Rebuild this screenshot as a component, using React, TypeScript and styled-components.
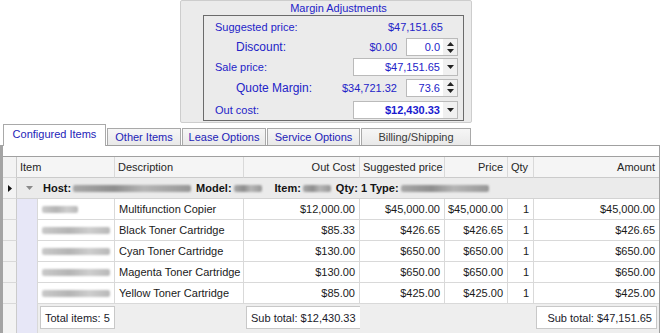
import styled, { createGlobalStyle } from 'styled-components';

const GlobalStyle = createGlobalStyle`
  html, body { margin: 0; padding: 0; background: #fff; }
  body { font-family: 'Liberation Sans', Arial, sans-serif; font-size: 11px; }
`;

const Page = styled.div`
  width: 660px;
  height: 333px;
  overflow: hidden;
  display: flex;
  flex-direction: column;
  background: #fff;
`;

const TopArea = styled.div`
  height: 124px;
  padding-left: 180px;
  box-sizing: border-box;
`;

const GroupBox = styled.div`
  width: 292px;
  height: 123px;
  box-sizing: border-box;
  border: 1px solid #cdcdcd;
  border-radius: 2px;
  background: #ebebeb;
  display: flex;
  flex-direction: column;
  padding: 0 7px 2px 22px;
`;

const GroupTitle = styled.div`
  height: 14px;
  line-height: 15px;
  padding-left: 10px;
  text-align: center;
  color: #2323c8;
`;

const InnerBox = styled.div`
  flex: 1;
  border: 1px solid #6b6b6b;
  display: flex;
  flex-direction: column;
`;

const FieldRow = styled.div<{ $h: number }>`
  height: ${({ $h }) => $h}px;
  display: flex;
  align-items: center;
  padding-right: 5px;
  color: #2323c8;
`;

const FieldLabel = styled.span<{ $indent: number }>`
  flex: 1;
  padding-left: ${({ $indent }) => $indent}px;
  font-size: ${({ $indent }) => ($indent > 20 ? 12 : 11)}px;
`;

const FieldValue = styled.span<{ $mr: number }>`
  margin-right: ${({ $mr }) => $mr}px;
`;

const Spinner = styled.div`
  width: 52px;
  height: 18px;
  box-sizing: border-box;
  border: 1px solid #bababa;
  display: flex;
  background: #f0f0f0;
`;

const Combo = styled(Spinner)`
  width: 105px;
`;

const InputText = styled.div<{ $bold?: boolean }>`
  flex: 1;
  background: #fff;
  text-align: right;
  padding-right: 3px;
  line-height: 16px;
  font-weight: ${({ $bold }) => ($bold ? 700 : 400)};
  color: ${({ $bold }) => ($bold ? '#1a1ad0' : '#2323c8')};
  margin: 0 1px 0 0;
`;

const ArrowBox = styled.div`
  width: 13px;
  display: flex;
  flex-direction: column;
  align-items: center;
  justify-content: center;
  gap: 3px;
`;

const Up = () => (
  <svg width="7" height="4" viewBox="0 0 7 4">
    <path d="M0 4 L3.5 0 L7 4 Z" fill="#222" />
  </svg>
);
const Down = () => (
  <svg width="7" height="4" viewBox="0 0 7 4">
    <path d="M0 0 L3.5 4 L7 0 Z" fill="#222" />
  </svg>
);

const TabStrip = styled.div`
  height: 22px;
  display: flex;
  align-items: flex-end;
  padding-left: 3px;
  gap: 1px;
  margin-bottom: -1px;
`;

const Tab = styled.div<{ $w: number; $active?: boolean; $dim?: boolean }>`
  width: ${({ $w }) => $w}px;
  height: ${({ $active }) => ($active ? 22 : 18)}px;
  box-sizing: border-box;
  border: 1px solid #a9a9a9;
  border-bottom: ${({ $active }) => ($active ? 'none' : '1px solid #a9a9a9')};
  background: ${({ $active }) => ($active ? '#fff' : 'linear-gradient(#f6f6f6, #e9e9e9)')};
  color: ${({ $dim }) => ($dim ? '#3a3a3a' : '#2323b8')};
  display: flex;
  align-items: center;
  justify-content: center;
  padding-bottom: ${({ $active }) => ($active ? 3 : 0)}px;
  position: relative;
  z-index: ${({ $active }) => ($active ? 2 : 0)};
`;

const Panel = styled.div`
  flex: 1;
  border-top: 1px solid #a0a0a0;
  border-left: 3px solid #a4a4a4;
  border-right: 1px solid #a0a0a0;
  background: #fff;
  padding-top: 10px;
  display: flex;
  flex-direction: column;
  position: relative;
  z-index: 1;
`;

const Grid = styled.div`
  flex: 1;
  border-top: 1px solid #a0a0a0;
  display: flex;
  flex-direction: column;
`;

const Row = styled.div<{ $h?: number }>`
  display: grid;
  grid-template-columns: 14px 21px 77px 129px 116px 85px 63px 26px 1fr;
  height: ${({ $h }) => ($h ? `${$h}px` : 'auto')};
  flex: ${({ $h }) => ($h ? 'none' : 1)};
`;

const Cell = styled.div<{ $right?: boolean; $span?: number; $last?: boolean }>`
  grid-column: span ${({ $span }) => $span || 1};
  display: flex;
  align-items: center;
  justify-content: ${({ $right }) => ($right ? 'flex-end' : 'flex-start')};
  padding: 0 4px;
  border-right: ${({ $last }) => ($last ? 'none' : '1px solid #d9d9d9')};
  border-bottom: 1px solid #d9d9d9;
  background: #fff;
  color: #1a1a1a;
  white-space: nowrap;
  overflow: hidden;
`;

const HeadCell = styled(Cell)`
  background: #f5f5f5;
  color: #262626;
  border-bottom-color: #cbcbcb;
  padding: 0 4px 0 3px;
`;

const Indicator = styled.div<{ $open?: boolean }>`
  background: #f3f3f3;
  border-right: 1px solid #cbcbcb;
  border-bottom: ${({ $open }) => ($open ? 'none' : '1px solid #d9d9d9')};
  display: flex;
  align-items: center;
  justify-content: center;
`;

const Indent = styled.div`
  background: #e7e7f7;
  border-right: 1px solid #d9d9d9;
`;

const GroupCell = styled.div`
  grid-column: 2 / -1;
  background: #ebebeb;
  border-bottom: 1px solid #d3d3d3;
  display: flex;
  align-items: center;
  padding-left: 9px;
  gap: 2px;
  white-space: nowrap;
  color: #141414;
`;

const Bold = styled.b<{ $ml?: number }>`
  margin-left: ${({ $ml }) => $ml || 0}px;
`;

const Blur = styled.span<{ $w: number; $light?: boolean }>`
  display: inline-block;
  width: ${({ $w }) => $w}px;
  height: 7px;
  border-radius: 2px;
  background: ${({ $light }) =>
    $light
      ? 'linear-gradient(90deg, #c9c9c9, #b4b4b4 40%, #cdcdcd 70%, #b9b9b9)'
      : 'linear-gradient(90deg, #a8a8a8, #8e8e8e 35%, #b5b5b5 60%, #979797)'};
  filter: blur(1px);
`;

const FooterCell = styled.div<{ $span?: number }>`
  grid-column: span ${({ $span }) => $span || 1};
  background: #eeeeee;
  padding: 2px 2px 3px;
  display: flex;
`;

const FooterBox = styled.div`
  flex: 1;
  height: 23px;
  box-sizing: border-box;
  background: #fff;
  border: 1px solid #c8c8c8;
  display: flex;
  align-items: center;
  justify-content: flex-end;
  padding: 0 4px;
  color: #1a1a2a;
  white-space: nowrap;
`;

const RowMark = () => (
  <svg width="4" height="7" viewBox="0 0 4 7">
    <path d="M0 0 L4 3.5 L0 7 Z" fill="#111" />
  </svg>
);

const Collapse = () => (
  <svg width="7" height="4" viewBox="0 0 7 4" style={{ marginRight: 8 }}>
    <path d="M0 0 L3.5 4 L7 0 Z" fill="#8a8a8a" />
  </svg>
);

const items = [
  { code: 36, desc: 'Multifunction Copier', out: '$12,000.00', sug: '$45,000.00', price: '$45,000.00', amount: '$45,000.00' },
  { code: 68, desc: 'Black Toner Cartridge', out: '$85.33', sug: '$426.65', price: '$426.65', amount: '$426.65' },
  { code: 68, desc: 'Cyan Toner Cartridge', out: '$130.00', sug: '$650.00', price: '$650.00', amount: '$650.00' },
  { code: 68, desc: 'Magenta Toner Cartridge', out: '$130.00', sug: '$650.00', price: '$650.00', amount: '$650.00' },
  { code: 68, desc: 'Yellow Toner Cartridge', out: '$85.00', sug: '$425.00', price: '$425.00', amount: '$425.00' },
];

export default function App() {
  return (
    <Page>
      <GlobalStyle />
      <TopArea>
        <GroupBox>
          <GroupTitle>Margin Adjustments</GroupTitle>
          <InnerBox>
            <FieldRow $h={21}>
              <FieldLabel $indent={11}>Suggested price:</FieldLabel>
              <FieldValue $mr={15}>$47,151.65</FieldValue>
            </FieldRow>
            <FieldRow $h={20}>
              <FieldLabel $indent={32}>Discount:</FieldLabel>
              <FieldValue $mr={9}>$0.00</FieldValue>
              <Spinner>
                <InputText>0.0</InputText>
                <ArrowBox>
                  <Up />
                  <Down />
                </ArrowBox>
              </Spinner>
            </FieldRow>
            <FieldRow $h={19}>
              <FieldLabel $indent={11}>Sale price:</FieldLabel>
              <Combo>
                <InputText>$47,151.65</InputText>
                <ArrowBox>
                  <Down />
                </ArrowBox>
              </Combo>
            </FieldRow>
            <FieldRow $h={23}>
              <FieldLabel $indent={32}>Quote Margin:</FieldLabel>
              <FieldValue $mr={9}>$34,721.32</FieldValue>
              <Spinner>
                <InputText>73.6</InputText>
                <ArrowBox>
                  <Up />
                  <Down />
                </ArrowBox>
              </Spinner>
            </FieldRow>
            <FieldRow $h={21}>
              <FieldLabel $indent={11}>Out cost:</FieldLabel>
              <Combo>
                <InputText $bold>$12,430.33</InputText>
                <ArrowBox>
                  <Down />
                </ArrowBox>
              </Combo>
            </FieldRow>
          </InnerBox>
        </GroupBox>
      </TopArea>

      <TabStrip>
        <Tab $w={103} $active>Configured Items</Tab>
        <Tab $w={74}>Other Items</Tab>
        <Tab $w={84}>Lease Options</Tab>
        <Tab $w={93}>Service Options</Tab>
        <Tab $w={110} $dim>Billing/Shipping</Tab>
      </TabStrip>

      <Panel>
        <Grid>
          <Row $h={21}>
            <Indicator />
            <HeadCell $span={2}>Item</HeadCell>
            <HeadCell>Description</HeadCell>
            <HeadCell $right>Out Cost</HeadCell>
            <HeadCell>Suggested price</HeadCell>
            <HeadCell $right>Price</HeadCell>
            <HeadCell>Qty</HeadCell>
            <HeadCell $right $last>Amount</HeadCell>
          </Row>
          <Row $h={21}>
            <Indicator>
              <RowMark />
            </Indicator>
            <GroupCell>
              <Collapse />
              <Bold>Host:</Bold>
              <Blur $w={118} />
              <Bold $ml={3}>Model:</Bold>
              <Blur $w={28} />
              <Bold $ml={11}>Item:</Bold>
              <Blur $w={28} />
              <Bold $ml={3}>Qty: 1 Type:</Bold>
              <Blur $w={88} />
            </GroupCell>
          </Row>
          {items.map((it, i) => (
            <Row $h={21} key={i}>
              <Indicator />
              <Indent />
              <Cell>
                <Blur $w={it.code} $light />
              </Cell>
              <Cell>{it.desc}</Cell>
              <Cell $right>{it.out}</Cell>
              <Cell $right>{it.sug}</Cell>
              <Cell $right>{it.price}</Cell>
              <Cell $right>1</Cell>
              <Cell $right $last>{it.amount}</Cell>
            </Row>
          ))}
          <Row>
            <Indicator $open />
            <Indent />
            <FooterCell>
              <FooterBox>Total items: 5</FooterBox>
            </FooterCell>
            <FooterCell />
            <FooterCell>
              <FooterBox>Sub total: $12,430.33</FooterBox>
            </FooterCell>
            <FooterCell $span={3} />
            <FooterCell>
              <FooterBox>Sub total: $47,151.65</FooterBox>
            </FooterCell>
          </Row>
        </Grid>
      </Panel>
    </Page>
  );
}
